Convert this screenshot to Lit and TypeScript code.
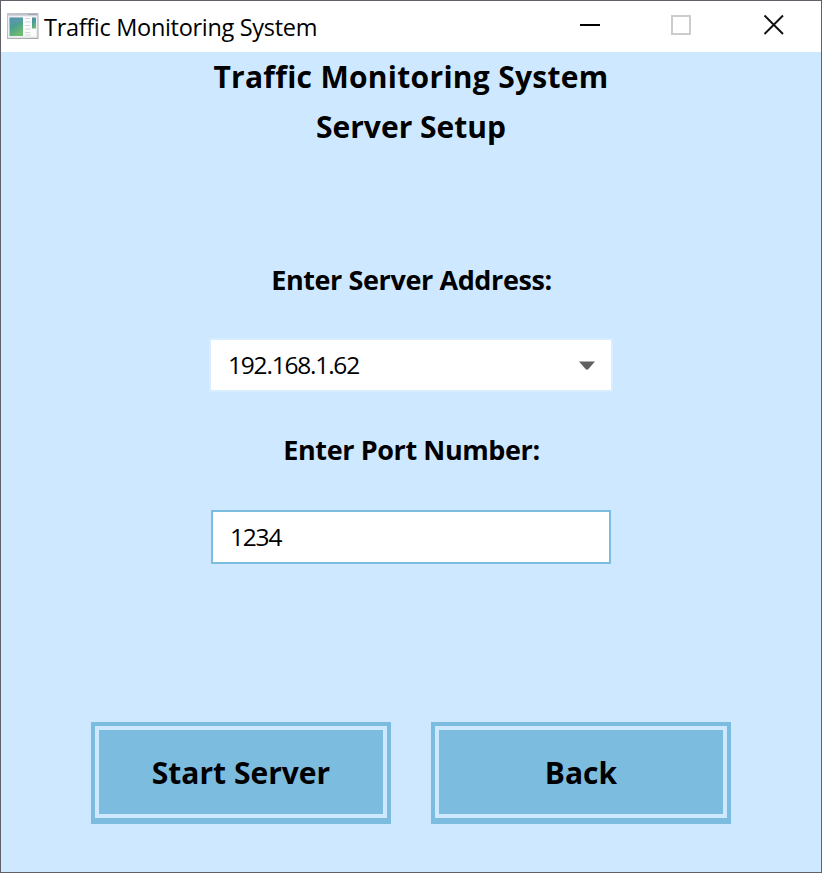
import { LitElement, html, css } from "lit";
import { customElement, property, state } from "lit/decorators.js";

@customElement("title-bar")
class TitleBar extends LitElement {
  @property() label = "";

  static styles = css`
    :host {
      display: flex;
      align-items: flex-start;
      height: 51px;
      background: #fff;
      color: #000;
    }
    .app-icon {
      display: block;
      margin: 12px 5px 0 6px;
    }
    .label {
      flex: 1;
      margin-top: 9px;
      font-size: 23.5px;
      line-height: 34px;
      letter-spacing: -0.31px;
      white-space: nowrap;
    }
    .controls {
      display: flex;
      margin-right: -1px;
    }
    .controls svg {
      display: block;
    }
  `;

  render() {
    return html`
      <svg class="app-icon" width="32" height="26" viewBox="0 0 32 26">
        <defs>
          <linearGradient id="pane" x1="0" y1="0" x2="0.5" y2="1">
            <stop offset="0" stop-color="#4f86ae" />
            <stop offset="0.5" stop-color="#4b9e91" />
            <stop offset="1" stop-color="#6dba70" />
          </linearGradient>
          <linearGradient id="frame" x1="0" y1="0" x2="1" y2="1">
            <stop offset="0" stop-color="#c4c7cc" />
            <stop offset="1" stop-color="#a2a5a9" />
          </linearGradient>
        </defs>
        <rect x="0.5" y="0.5" width="30.500" height="25" fill="#e3e5e8" stroke="url(#frame)" />
        <path d="M1 1h30v1.500H1z" fill="#c0c4cc" />
        <path d="M21 1h9v1h-9z" fill="#9fa6b4" />
        <rect x="1.500" y="3.500" width="28" height="20" fill="#fcfcfc" />
        <rect x="2.500" y="4.500" width="13.500" height="18.500" fill="url(#pane)" />
        <path d="M2.500 14C7 10 11 10 16 8V4.500H2.500z" fill="#6a9fba" opacity="0.400" />
        <path d="M18 5.500h5M18 9h6M18 12.500h5M18 16h6M18 19.500h5M18 22h6" stroke="#d2d4d7" />
        <rect x="25" y="4.500" width="4" height="11" fill="url(#pane)" />
      </svg>
      <div class="label">${this.label}</div>
      <div class="controls">
        <svg width="92" height="50" viewBox="0 0 92 50"><path d="M36 24h20" stroke="#000" stroke-width="2" /></svg>
        <svg width="92" height="50" viewBox="0 0 92 50"><rect x="36" y="15" width="18" height="18" fill="none" stroke="#ccc" stroke-width="2" /></svg>
        <svg width="94" height="50" viewBox="0 0 94 50"><path d="M36.500 14.500L55 33M55 14.500L36.500 33" stroke="#111" stroke-width="1.900" /></svg>
      </div>
    `;
  }
}

@customElement("app-root")
class AppRoot extends LitElement {
  @state() address = "192.168.1.62";
  @state() port = "1234";

  static styles = css`
    :host {
      display: block;
      box-sizing: border-box;
      width: 822px;
      height: 873px;
      border: 1px solid #5f6068;
      background: #cee9ff;
      color: #000;
      font-family: "Open Sans", "Noto Sans", sans-serif;
    }
    .content {
      display: flex;
      flex-direction: column;
      align-items: center;
    }
    .heading {
      font-size: 30px;
      line-height: 50px;
      font-weight: 700;
      text-align: center;
      white-space: nowrap;
    }
    .line {
      display: block;
    }
    .title {
      letter-spacing: 0.29px;
    }
    .field-label {
      font-size: 27px;
      line-height: 40px;
      font-weight: 700;
      letter-spacing: -0.4px;
      white-space: nowrap;
      padding-left: 1px;
    }
    .address-label {
      margin-top: 108px;
    }
    .port-label {
      margin-top: 38px;
    }
    .combo,
    .input {
      display: flex;
      align-items: center;
      box-sizing: border-box;
      font-size: 24.5px;
      line-height: 34px;
    }
    .combo {
      justify-content: space-between;
      width: 404px;
      height: 54px;
      margin-top: 38px;
      padding: 0 16px 0 17px;
      border: 2px solid #d8edff;
      background: #fff;
    }
    .value {
      letter-spacing: -1.2px;
    }
    .input {
      width: 400px;
      height: 54px;
      margin-top: 40px;
      padding: 0 17px;
      border: 2px solid #7cbcdf;
      background: #fff;
    }
    .buttons {
      display: flex;
      gap: 40px;
      margin-top: 158px;
    }
    .button {
      box-sizing: border-box;
      width: 300px;
      height: 102px;
      padding: 0;
      border: 4px solid #7cbcdf;
      border-bottom-width: 6px;
      background: #cee9ff;
      display: flex;
      color: inherit;
      font: inherit;
    }
    .face {
      flex: 1;
      margin: 4px;
      height: 84px;
      background: #7cbcdf;
      font-size: 30px;
      line-height: 86px;
      font-weight: 700;
      text-align: center;
    }
  `;

  render() {
    return html`
      <title-bar label="Traffic Monitoring System"></title-bar>
      <main class="content">
        <div class="heading">
          <span class="line title">Traffic Monitoring System</span>
          <span class="line">Server Setup</span>
        </div>
        <div class="field-label address-label">Enter Server Address:</div>
        <div class="combo">
          <span class="value">${this.address}</span>
          <svg width="16" height="9" viewBox="0 0 16 9"><path d="M0 0.500h16L9 8.500H7z" fill="#606060" /></svg>
        </div>
        <div class="field-label port-label">Enter Port Number:</div>
        <div class="input"><span class="value">${this.port}</span></div>
        <div class="buttons">
          <button class="button"><span class="face">Start Server</span></button>
          <button class="button"><span class="face">Back</span></button>
        </div>
      </main>
    `;
  }
}
